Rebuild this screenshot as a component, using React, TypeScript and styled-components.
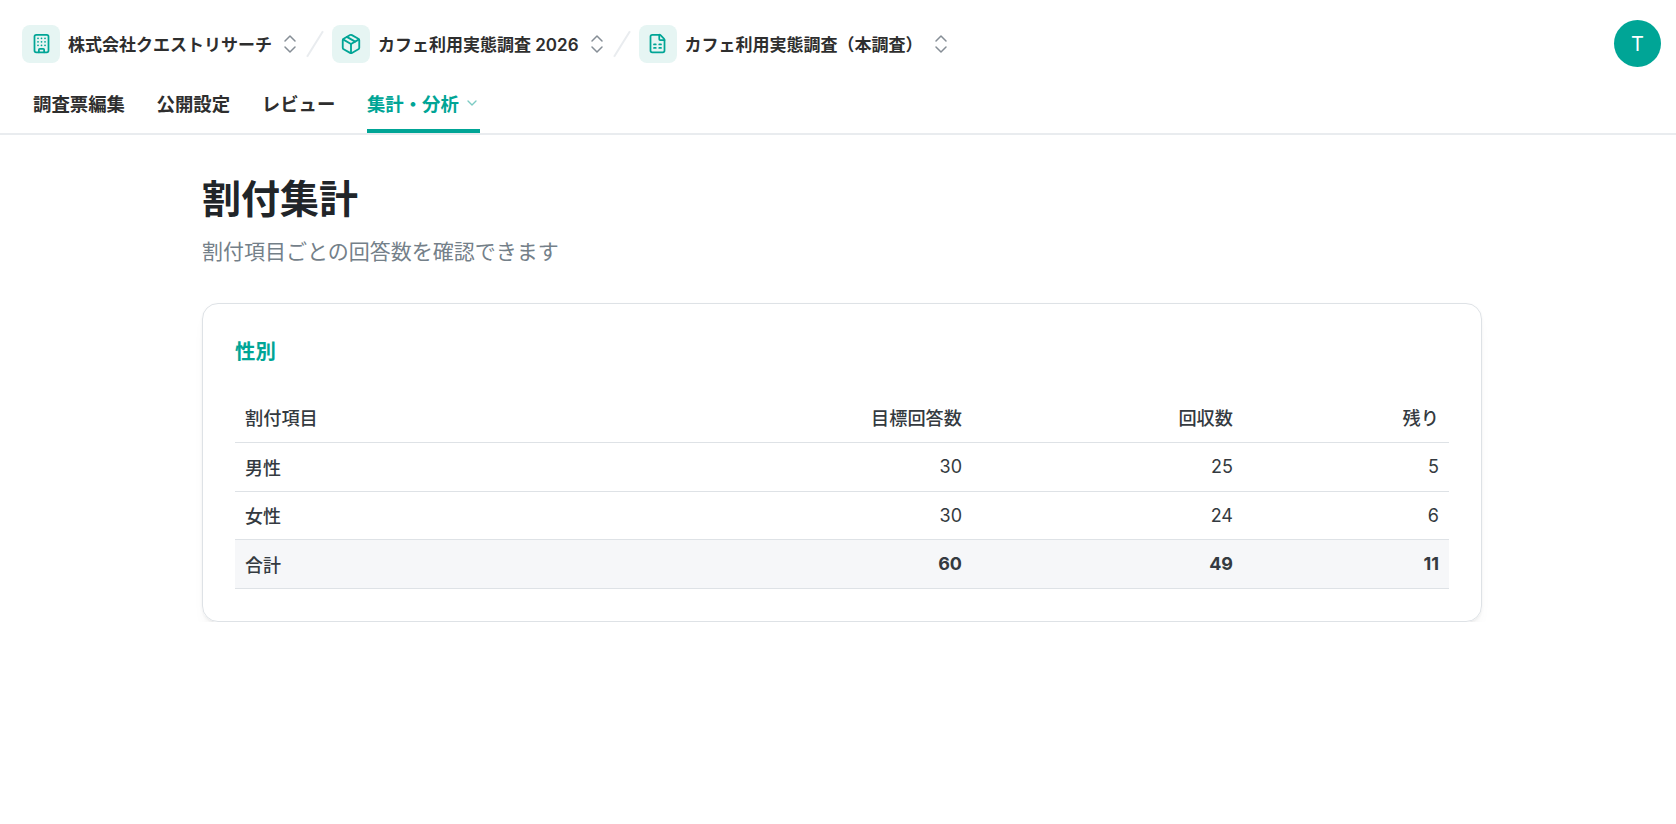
import React from "react";
import styled, { createGlobalStyle } from "styled-components";
import {
  Building,
  Package,
  FileSpreadsheet,
  ChevronsUpDown,
  ChevronDown,
} from "lucide-react";

const teal = "#00a596";
const FONT = `Inter, "Noto Sans CJK JP", sans-serif`;

const GlobalStyle = createGlobalStyle`
  html, body {
    margin: 0;
    padding: 0;
    background: #fff;
    color: #212529;
    font-family: ${FONT};
  }
`;

const crumbs = [
  { icon: <Building size={21} />, label: "株式会社クエストリサーチ" },
  { icon: <Package size={22} />, label: "カフェ利用実態調査 2026" },
  { icon: <FileSpreadsheet size={21} />, label: "カフェ利用実態調査（本調査）" },
];

const tabs = ["調査票編集", "公開設定", "レビュー"];

const rows = [
  { name: "男性", target: 30, got: 25, rest: 5 },
  { name: "女性", target: 30, got: 24, rest: 6 },
];

const App: React.FC = () => {
  return (
    <>
      <GlobalStyle />
      <Header>
        <TopRow>
          <Crumbs>
            {crumbs.map((c, i) => (
              <React.Fragment key={c.label}>
                {i > 0 && <Slash />}
                <Crumb>
                  <IconBox>{c.icon}</IconBox>
                  <CrumbLabel>{c.label}</CrumbLabel>
                  <Selector>
                    <ChevronsUpDown size={24} strokeWidth={1.5} />
                  </Selector>
                </Crumb>
              </React.Fragment>
            ))}
          </Crumbs>
          <Avatar>T</Avatar>
        </TopRow>
        <Tabs>
          {tabs.map((t) => (
            <Tab key={t}>{t}</Tab>
          ))}
          <Tab $active>
            集計・分析
            <ChevronDown size={16} />
          </Tab>
        </Tabs>
      </Header>
      <Main>
        <Title>割付集計</Title>
        <Subtitle>割付項目ごとの回答数を確認できます</Subtitle>
        <Card>
          <CardTitle>性別</CardTitle>
          <Table>
            <colgroup>
              <col />
              <col />
              <col width={271} />
              <col width={206} />
            </colgroup>
            <thead>
              <tr>
                <Th>割付項目</Th>
                <Th $right>目標回答数</Th>
                <Th $right>回収数</Th>
                <Th $right>残り</Th>
              </tr>
            </thead>
            <tbody>
              {rows.map((r) => (
                <tr key={r.name}>
                  <NameCell>{r.name}</NameCell>
                  <NumCell>{r.target}</NumCell>
                  <NumCell>{r.got}</NumCell>
                  <NumCell>{r.rest}</NumCell>
                </tr>
              ))}
              <TotalRow>
                <NameCell>合計</NameCell>
                <NumCell>60</NumCell>
                <NumCell>49</NumCell>
                <NumCell>11</NumCell>
              </TotalRow>
            </tbody>
          </Table>
        </Card>
      </Main>
    </>
  );
};

export default App;

const Header = styled.header`
  border-bottom: 2px solid #e9ecef;
  height: 135px;
  box-sizing: border-box;
  padding: 20px 15px 0 22px;
`;

const TopRow = styled.div`
  display: flex;
  align-items: center;
  justify-content: space-between;
  height: 47px;
`;

const Crumbs = styled.div`
  display: flex;
  align-items: center;
`;

const Crumb = styled.div`
  display: flex;
  align-items: center;
`;

const IconBox = styled.span`
  width: 38px;
  height: 38px;
  border-radius: 8px;
  background: #e6f5f3;
  color: ${teal};
  display: flex;
  align-items: center;
  justify-content: center;
`;

const CrumbLabel = styled.span`
  margin-left: 8px;
  font-size: 17px;
  font-weight: 600;
  color: #2e2e2e;
  white-space: nowrap;
`;

const Selector = styled.span`
  display: flex;
  margin-left: 6px;
  color: #868e96;
`;

const Slash = styled.span`
  width: 2px;
  height: 30px;
  margin: 0 16px 0 12px;
  background: #e9ecef;
  transform: rotate(32deg);
`;

const Avatar = styled.div`
  width: 47px;
  height: 47px;
  border-radius: 50%;
  background: ${teal};
  color: #fff;
  font-size: 20px;
  display: flex;
  align-items: center;
  justify-content: center;
`;

const Tabs = styled.nav`
  display: flex;
  gap: 31.6px;
  margin: 12px 0 0 11px;
`;

const Tab = styled.div<{ $active?: boolean }>`
  display: flex;
  align-items: center;
  gap: 5px;
  height: 54px;
  padding-bottom: 2px;
  box-sizing: border-box;
  font-size: 18.4px;
  font-weight: 600;
  color: ${(p) => (p.$active ? teal : "#2e2e2e")};
  border-bottom: 4px solid ${(p) => (p.$active ? teal : "transparent")};
  svg {
    color: #7ccbc3;
  }
`;

const Main = styled.main`
  width: 1280px;
  margin-left: 202px;
`;

const Title = styled.h1`
  margin: 36px 0 0;
  font-size: 39px;
  line-height: 56px;
  font-weight: 700;
  color: #212529;
`;

const Subtitle = styled.p`
  margin: 9px 0 0;
  font-size: 21px;
  line-height: 32px;
  color: #748089;
`;

const Card = styled.section`
  margin-top: 35px;
  box-sizing: border-box;
  padding: 32px;
  border: 1px solid #dee2e6;
  border-radius: 16px;
  box-shadow:
    0 1px 3px rgba(0, 0, 0, 0.05),
    0 10px 15px -5px rgba(0, 0, 0, 0.05),
    0 7px 7px -5px rgba(0, 0, 0, 0.04);
`;

const CardTitle = styled.h2`
  margin: 2px 0 25px;
  font-size: 20.4px;
  line-height: 28px;
  font-weight: 700;
  color: ${teal};
`;

const Table = styled.table`
  width: 100%;
  border-collapse: collapse;
  table-layout: auto;
  font-size: 18px;
  color: #343a40;
`;

const Th = styled.th<{ $right?: boolean }>`
  height: 51px;
  padding: 0 10px;
  font-weight: 500;
  font-size: 18.2px;
  text-align: ${(p) => (p.$right ? "right" : "left")};
  border-bottom: 1px solid #dee2e6;
`;

const NameCell = styled.td`
  height: 47.5px;
  padding: 0 10px;
  font-weight: 500;
  border-bottom: 1px solid #dee2e6;
`;

const NumCell = styled.td`
  height: 47.5px;
  padding: 0 10px;
  text-align: right;
  border-bottom: 1px solid #dee2e6;
`;

const TotalRow = styled.tr`
  background: #f6f7f9;
  td:not(:first-child) {
    font-weight: 700;
  }
`;
